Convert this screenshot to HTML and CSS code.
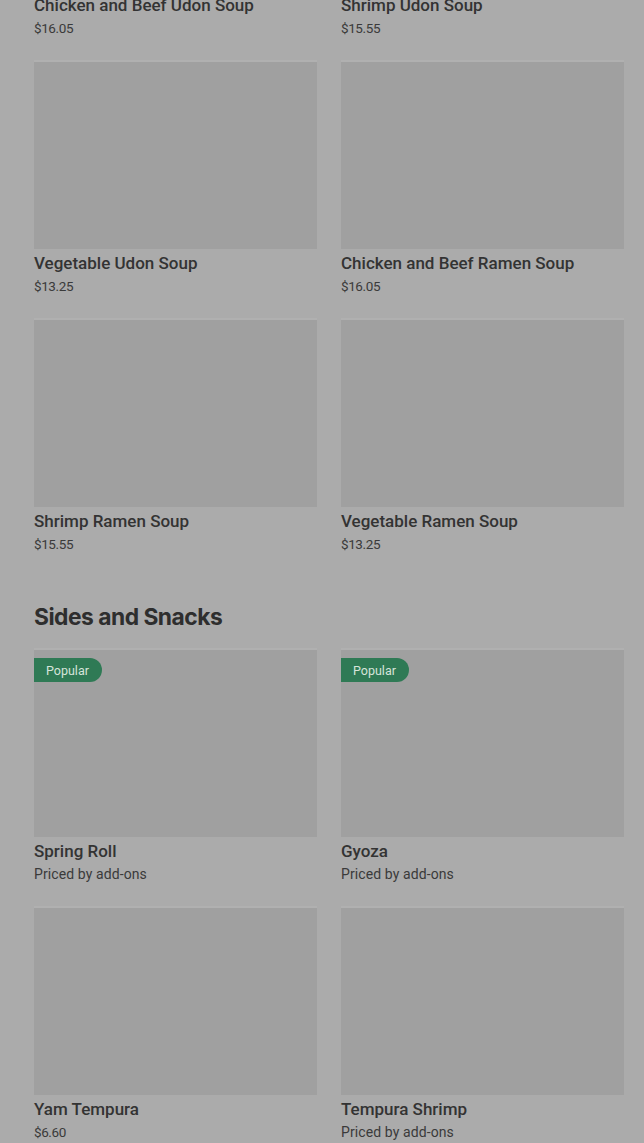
FILE: index.html
```html
<!DOCTYPE html>
<html>
<head>
<meta charset="utf-8">
<link rel="stylesheet" href="styles.css">
</head>
<body>
<div class="page">
  <section class="section">
    <div class="grid">
      <div class="item"><div class="thumb"></div><div class="name">Chicken and Beef Udon Soup</div><div class="price">$16.05</div></div>
      <div class="item"><div class="thumb"></div><div class="name">Shrimp Udon Soup</div><div class="price">$15.55</div></div>
      <div class="item"><div class="thumb"></div><div class="name">Vegetable Udon Soup</div><div class="price">$13.25</div></div>
      <div class="item"><div class="thumb"></div><div class="name">Chicken and Beef Ramen Soup</div><div class="price">$16.05</div></div>
      <div class="item"><div class="thumb"></div><div class="name">Shrimp Ramen Soup</div><div class="price">$15.55</div></div>
      <div class="item"><div class="thumb"></div><div class="name">Vegetable Ramen Soup</div><div class="price">$13.25</div></div>
    </div>
  </section>
  <section class="section">
    <h2 class="heading">Sides and Snacks</h2>
    <div class="grid">
      <div class="item"><div class="thumb"><span class="badge">Popular</span></div><div class="name">Spring Roll</div><div class="price note">Priced by add-ons</div></div>
      <div class="item"><div class="thumb"><span class="badge">Popular</span></div><div class="name">Gyoza</div><div class="price note">Priced by add-ons</div></div>
      <div class="item"><div class="thumb"></div><div class="name">Yam Tempura</div><div class="price">$6.60</div></div>
      <div class="item"><div class="thumb"></div><div class="name">Tempura Shrimp</div><div class="price note">Priced by add-ons</div></div>
    </div>
  </section>
</div>
</body>
</html>
```
FILE: styles.css
```css
html, body {
  margin: 0;
  padding: 0;
  background: #ababab;
  overflow: hidden;
}
.page {
  margin-top: -196px;
  padding-left: 34px;
  width: 590px;
  font-family: "Roboto", "Liberation Sans", sans-serif;
  color: #333333;
}
.grid {
  display: grid;
  grid-template-columns: 283px 283px;
  column-gap: 24px;
}
.item {
  display: flex;
  flex-direction: column;
  padding-bottom: 24px;
}
.thumb {
  position: relative;
  height: 187px;
  background: #a0a0a0;
  box-shadow: 0 -2px 0 #b0b0b0;
}
.name {
  margin-top: 3px;
  font-size: 17px;
  line-height: 22px;
  font-weight: 500;
  color: #333333;
  white-space: nowrap;
}
.price {
  margin-top: 2px;
  font-size: 13.5px;
  line-height: 20px;
  letter-spacing: -0.4px;
  color: #3a3a3a;
}
.note {
  font-size: 14px;
  letter-spacing: 0.1px;
}
.heading {
  margin: 23px 0 17px 0;
  font-family: "Inter", "Liberation Sans", sans-serif;
  font-size: 22.8px;
  line-height: 32px;
  font-weight: 700;
  letter-spacing: -0.5px;
  color: #2e2e2e;
}
.badge {
  position: absolute;
  top: 8px;
  left: 0;
  height: 24px;
  line-height: 25px;
  padding: 0 13px 0 12px;
  background: #2f7a55;
  color: #d6e4da;
  font-size: 12.5px;
  border-radius: 0 12px 12px 0;
}
```
